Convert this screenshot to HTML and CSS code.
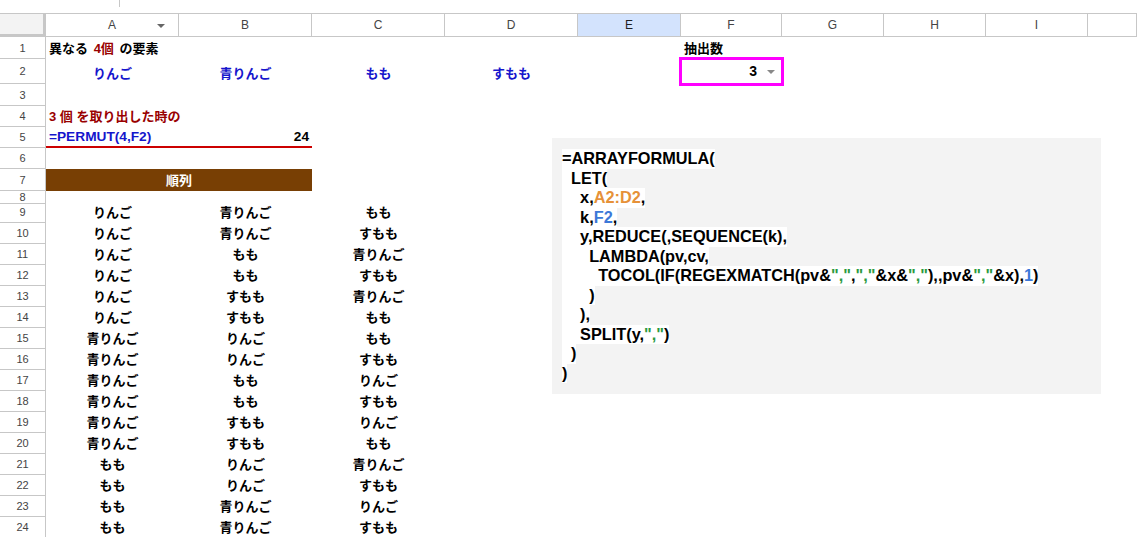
FILE: index.html
```html
<!DOCTYPE html>
<html lang="ja">

<head>
    <meta charset="utf-8">
    <title>順列 - Sheet</title>
    <link rel="stylesheet" href="styles.css">
</head>

<body>
    <div class="topbar">
        <div class="namebox">226</div>
        <div class="fx">fx</div>
    </div>

    <div class="sheet">
        <div class="row head">
            <div class="corner"></div>
            <div class="colhead">A<span class="caret menu"></span></div>
            <div class="colhead">B</div>
            <div class="colhead">C</div>
            <div class="colhead">D</div>
            <div class="colhead selected">E</div>
            <div class="colhead">F</div>
            <div class="colhead">G</div>
            <div class="colhead">H</div>
            <div class="colhead">I</div>
            <div class="colhead"></div>
        </div>

        <div class="row h22">
            <div class="rh">1</div>
            <div class="c spaced">異なる <span class="dark-red">4個</span> の要素</div>
            <div class="c"></div>
            <div class="c"></div>
            <div class="c"></div>
            <div class="c"></div>
            <div class="c">抽出数</div>
        </div>

        <div class="row h25">
            <div class="rh">2</div>
            <div class="c center blue">りんご</div>
            <div class="c center blue">青りんご</div>
            <div class="c center blue">もも</div>
            <div class="c center blue">すもも</div>
            <div class="c"></div>
            <div class="c right picker">3<span class="caret"></span></div>
        </div>

        <div class="row h22">
            <div class="rh">3</div>
        </div>

        <div class="row">
            <div class="rh">4</div>
            <div class="c dark-red">3 個 を取り出した時の</div>
        </div>

        <div class="row">
            <div class="rh">5</div>
            <div class="c blue underline">=PERMUT(4,F2)</div>
            <div class="c right underline">24</div>
        </div>

        <div class="row">
            <div class="rh">6</div>
        </div>

        <div class="row h22">
            <div class="rh">7</div>
            <div class="c center banner">順列</div>
        </div>

        <div class="row h11">
            <div class="rh">8</div>
        </div>

        <div class="row"><div class="rh">9</div><div class="c center">りんご</div><div class="c center">青りんご</div><div class="c center">もも</div></div>
        <div class="row"><div class="rh">10</div><div class="c center">りんご</div><div class="c center">青りんご</div><div class="c center">すもも</div></div>
        <div class="row"><div class="rh">11</div><div class="c center">りんご</div><div class="c center">もも</div><div class="c center">青りんご</div></div>
        <div class="row"><div class="rh">12</div><div class="c center">りんご</div><div class="c center">もも</div><div class="c center">すもも</div></div>
        <div class="row"><div class="rh">13</div><div class="c center">りんご</div><div class="c center">すもも</div><div class="c center">青りんご</div></div>
        <div class="row"><div class="rh">14</div><div class="c center">りんご</div><div class="c center">すもも</div><div class="c center">もも</div></div>
        <div class="row"><div class="rh">15</div><div class="c center">青りんご</div><div class="c center">りんご</div><div class="c center">もも</div></div>
        <div class="row"><div class="rh">16</div><div class="c center">青りんご</div><div class="c center">りんご</div><div class="c center">すもも</div></div>
        <div class="row"><div class="rh">17</div><div class="c center">青りんご</div><div class="c center">もも</div><div class="c center">りんご</div></div>
        <div class="row"><div class="rh">18</div><div class="c center">青りんご</div><div class="c center">もも</div><div class="c center">すもも</div></div>
        <div class="row"><div class="rh">19</div><div class="c center">青りんご</div><div class="c center">すもも</div><div class="c center">りんご</div></div>
        <div class="row"><div class="rh">20</div><div class="c center">青りんご</div><div class="c center">すもも</div><div class="c center">もも</div></div>
        <div class="row"><div class="rh">21</div><div class="c center">もも</div><div class="c center">りんご</div><div class="c center">青りんご</div></div>
        <div class="row"><div class="rh">22</div><div class="c center">もも</div><div class="c center">りんご</div><div class="c center">すもも</div></div>
        <div class="row"><div class="rh">23</div><div class="c center">もも</div><div class="c center">青りんご</div><div class="c center">りんご</div></div>
        <div class="row"><div class="rh">24</div><div class="c center">もも</div><div class="c center">青りんご</div><div class="c center">すもも</div></div>

        <!-- pasted formula picture floating over the grid -->
        <div class="formula-box">
            <div class="line">=ARRAYFORMULA(</div>
            <div class="line">  LET(</div>
            <div class="line">    x,<span class="ref-orange">A2:D2</span>,</div>
            <div class="line">    k,<span class="ref-blue">F2</span>,</div>
            <div class="line">    y,REDUCE(,SEQUENCE(k),</div>
            <div class="line">      LAMBDA(pv,cv,</div>
            <div class="line">        TOCOL(IF(REGEXMATCH(pv&amp;<span class="str">","</span>,<span class="str">","</span>&amp;x&amp;<span class="str">","</span>),,pv&amp;<span class="str">","</span>&amp;x),<span class="ref-blue">1</span>)</div>
            <div class="line">      )</div>
            <div class="line">    ),</div>
            <div class="line">    SPLIT(y,<span class="str">","</span>)</div>
            <div class="line">  )</div>
            <div class="line">)</div>
        </div>
    </div>
</body>

</html>
```

FILE: styles.css
```css
* {
    box-sizing: border-box;
    margin: 0;
    padding: 0;
}

body {
    font-family: 'Liberation Sans', 'Noto Sans CJK JP', sans-serif;
    background: white;
    color: #000;
    overflow: hidden;
}

/* formula bar, mostly scrolled out of view */
.topbar {
    height: 14px;
    display: flex;
    align-items: flex-end;
    overflow: hidden;
    border-bottom: 1px solid #c7c7c7;
}

.namebox {
    width: 120px;
    height: 26px;
    line-height: 26px;
    padding-left: 16px;
    font-size: 14px;
    color: #444;
    border-right: 1px solid #c7c7c7;
    margin-bottom: 6px;
    flex-shrink: 0;
}

.fx {
    height: 26px;
    line-height: 26px;
    margin-left: 12px;
    margin-bottom: 6px;
    font-size: 15px;
    font-style: italic;
    color: #b0b0b0;
}

.sheet {
    position: relative;
}

.row {
    display: grid;
    grid-template-columns: 46px 133px 133px 133px 133px 103px 101px 102px 102px 102px 1fr;
    height: 21px;
}

.h22 { height: 22px; }
.h25 { height: 25px; }
.h11 { height: 11px; }

.row.head {
    height: 23px;
}

.corner {
    background: #f3f3f3;
    border-right: 3px solid #c7c7c7;
    border-bottom: 3px solid #c7c7c7;
}

.colhead {
    position: relative;
    display: flex;
    align-items: center;
    justify-content: center;
    font-size: 12px;
    color: #444;
    border-right: 1px solid #c7c7c7;
    border-bottom: 1px solid #c7c7c7;
}

.colhead.selected {
    background: #d3e3fd;
    color: #1f1f1f;
}

.rh {
    display: flex;
    align-items: center;
    justify-content: center;
    font-size: 11px;
    color: #444;
    border-right: 1px solid #c7c7c7;
    border-bottom: 1px solid #c7c7c7;
}

.c {
    display: flex;
    align-items: flex-end;
    min-width: 0;
    padding: 0 3px 2px;
    font-size: 13px;
    font-weight: bold;
    line-height: 17px;
    white-space: pre;
}

.spaced {
    word-spacing: 2px;
}

.center { justify-content: center; }
.right { justify-content: flex-end; }

.blue { color: #1515cc; }
.dark-red { color: #990000; }

.underline {
    font-size: 13.7px;
    border-bottom: 2px solid #cc0000;
    padding-bottom: 1px;
}

.banner {
    grid-column: span 2;
    align-items: center;
    padding: 0;
    background: #783f04;
    color: white;
}

.caret {
    width: 0;
    height: 0;
    border-left: 4px solid transparent;
    border-right: 4px solid transparent;
    border-top: 4px solid #888;
}

.caret.menu {
    position: absolute;
    right: 13px;
    top: 10px;
    border-top-color: #666;
}

.picker {
    align-items: center;
    gap: 10px;
    padding: 0 7px 0 0;
    font-size: 14px;
    outline: 3px solid #ff00ff;
    outline-offset: -1px;
}

.formula-box {
    position: absolute;
    left: 552px;
    top: 124px;
    width: 549px;
    height: 256px;
    padding: 11px 10px;
    background: #f3f3f3;
    font-size: 16.3px;
    font-weight: bold;
    line-height: 19.5px;
}

.line {
    width: fit-content;
    white-space: pre;
    background: white;
}

.ref-orange { color: #e69138; }
.ref-blue { color: #3c78d8; }
.str { color: #2b9a3f; }
```
